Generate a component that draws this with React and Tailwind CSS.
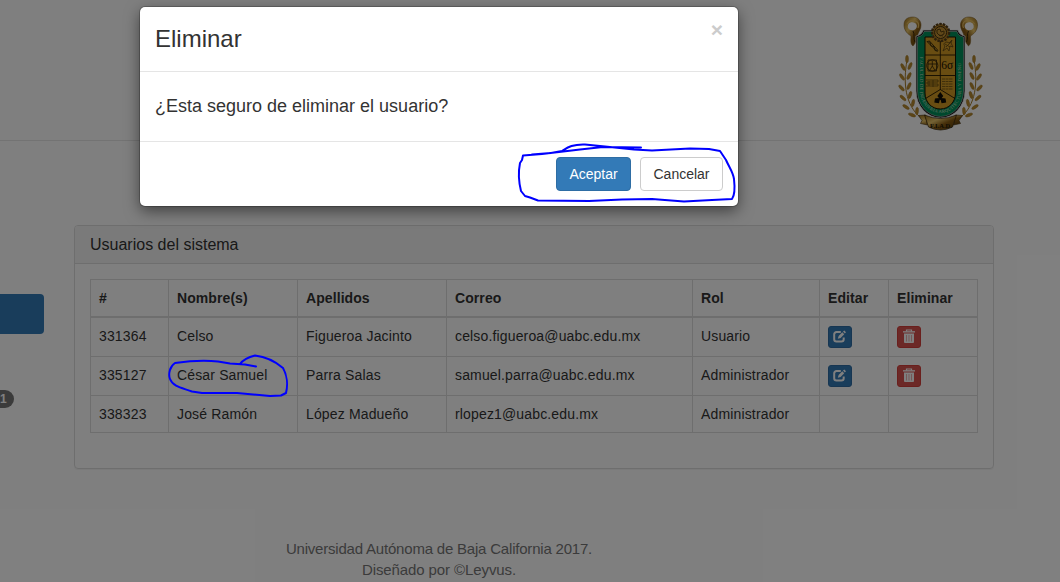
import React from "react";

const users = [
  { id: "331364", name: "Celso", last: "Figueroa Jacinto", mail: "celso.figueroa@uabc.edu.mx", role: "Usuario", actions: true, h: "h-[39px]" },
  { id: "335127", name: "César Samuel", last: "Parra Salas", mail: "samuel.parra@uabc.edu.mx", role: "Administrador", actions: true, h: "h-[39px]" },
  { id: "338323", name: "José Ramón", last: "López Madueño", mail: "rlopez1@uabc.edu.mx", role: "Administrador", actions: false, h: "h-[37px]" },
];

const headings = ["#", "Nombre(s)", "Apellidos", "Correo", "Rol", "Editar", "Eliminar"];
const columns = "grid grid-cols-[78px_129px_149px_246px_127px_69px_89px]";

function EditIcon() {
  return (
    <svg width="13" height="13" viewBox="0 0 13 13" fill="none">
      <path d="M7.800 2H3.500A2.300 2.300 0 0 0 1.200 4.300v4.900a2.300 2.300 0 0 0 2.300 2.300h4.900a2.300 2.300 0 0 0 2.300-2.300V7.600" stroke="#fff" strokeWidth="2" />
      <path d="M4.800 8.800l.8-2.900L9.300 2.300l1.900 1.900L7.600 7.900z" fill="#fff" />
      <path d="M10 1.600L11.300.4l1.700 1.800-1.200 1.200z" fill="#fff" />
    </svg>
  );
}

function TrashIcon() {
  return (
    <svg width="12" height="14" viewBox="0 0 12 14" fill="none">
      <path d="M3.500 2.500V1h5v1.500" stroke="#fff" strokeWidth="1.200" />
      <path d="M0 2.200h12v1.300H0z" fill="#fff" />
      <path d="M1 4.500h10V13q0 1-1 1H2q-1 0-1-1z" fill="#fff" />
      <path d="M3.500 6v6.500M6 6v6.500M8.500 6v6.500" stroke="#d9534f" strokeOpacity=".65" strokeWidth=".7" />
    </svg>
  );
}

function Ram({ flip }) {
  return (
    <g transform={flip ? "translate(101.500 0) scale(-1 1)" : undefined}>
      <path d="M21 31C16 28 14 24 14 20C14 14 18 12 23 12C28 12 31 16 31 20C31 24 29 26 28 29C27 32 28 35 26 37L23 41C20 39 21 34 21 31Z" fill="url(#gold)" stroke="#76551c" strokeWidth=".5" />
      <path d="M18 23C17 18 21 16 25 18C28 20 27 24 24 25Q20 26 18 23Z" fill="#fff" />
      <path d="M17 19Q20 14 26 16Q30 18 28 23" stroke="#e7bd60" strokeWidth="1.200" />
      <path d="M23 26C25 29 23 34 25 37" stroke="#392809" strokeWidth="1" />
    </g>
  );
}

function Laurel({ flip }) {
  const leaves = [
    [17, 54, 0], [13, 62, -28], [20, 61, 24], [12, 72, -34], [19, 71, 26], [11.5, 83, -42], [19, 81, 24],
    [13, 93, -48], [20, 90, 18], [16, 102, -56], [23, 98, 12], [22, 110, -68], [27, 106, 4],
  ];
  return (
    <g transform={flip ? "translate(101 0) scale(-1 1)" : undefined}>
      <path d="M17 55C13 78 15 100 31 113" stroke="#a67b24" strokeWidth="1" />
      {leaves.map(([x, y, a]) => (
        <ellipse key={y} cx={x} cy={y} rx="1.500" ry="3.800" transform={`rotate(${a} ${x} ${y})`} fill="#b88a2c" stroke="#987026" strokeWidth=".4" />
      ))}
    </g>
  );
}

function Crest() {
  return (
    <svg width="100" height="130" viewBox="0 0 100 130" fill="none">
      <defs>
        <linearGradient id="gold" x1="0" x2="1" y1="0" y2="1">
          <stop offset="0" stopColor="#9c7018" />
          <stop offset=".35" stopColor="#e9c66b" />
          <stop offset=".6" stopColor="#8a5e14" />
          <stop offset="1" stopColor="#573b0c" />
        </linearGradient>
        <path id="motto" d="M29.800 52V85A20.700 23 0 0 0 71.200 85V52" />
      </defs>
      <Laurel />
      <Laurel flip />
      <Ram />
      <Ram flip />
      <path d="M33 25H68Q69 30 75 31V86A24.500 27 0 0 1 26 86V31Q32 30 33 25Z" fill="#000" stroke="#eee" strokeWidth=".8" />
      <path d="M34 26.500H67Q68 31 73.500 32V86A23 25.500 0 0 1 27.500 86V32Q33 31 34 26.500Z" fill="#00905a" stroke="#ddd" strokeWidth=".5" />
      <path d="M35 32H65.500V88C65.500 97 59 104 50.300 104C41.500 104 35 97 35 88Z" fill="#d39a24" stroke="#171000" strokeWidth="1" />
      <path d="M50.300 32V85M35 50H65.500M35 70.500H65.500M35.500 93.500L50.300 84.500L65 93.500" stroke="#211600" strokeWidth=".9" />
      <path d="M37 36.500l10 10M39 35.500l9 10M37 36.500l3 .5 1 4 3 .5 1 4 3 .5" stroke="#40310b" strokeWidth="1" />
      <path d="M57 37c-3 0-4 3-2 4l-2 5 4-3 2 3 1-5 3 1-2-4 1-3-3 3zM55 39l5 3m1-5l-5 5" stroke="#5e4511" strokeWidth=".8" />
      <circle cx="42.300" cy="60.500" r="5.600" stroke="#211600" strokeWidth=".8" />
      <path d="M38 55h8.500v11H38zM42.300 56v5l-3 5m3-5l3 5M38 59h8.500" stroke="#2c2007" strokeWidth=".8" />
      <text x="57.300" y="63.500" textAnchor="middle" fontSize="11.500" fill="#171000" className="font-['Liberation_Serif']">6σ</text>
      <path d="M36 75h12v2H37v2h11v2H36m3-5v5m4-6v7" stroke="#60490f" strokeWidth=".8" />
      <path d="M52 74h11M52 76.500h11M52 79h11M52 81.500h11M52 84h11" stroke="#685014" strokeWidth=".8" strokeDasharray="3 .5" />
      <path d="M50.300 94l-2.200-3 2.200-3 2.200 3zM49.500 93.500l-4 .5-.5 3 3.500.5zM51 93.500l4 .5.5 3-3.500.5z" fill="#100d05" stroke="#100d05" strokeWidth="1.200" />
      <text fontSize="4.600" fill="#d5e0c5" className="font-['Liberation_Serif']">
        <textPath href="#motto" textLength="128">FACULTAD DE INGENIERIA ARQUITECTURA Y DISEÑO</textPath>
      </text>
      <circle cx="50.600" cy="27.500" r="8.500" fill="#b78322" stroke="#59401a" strokeWidth="2.400" strokeDasharray="2.500 1" />
      <circle cx="50.600" cy="27.500" r="6" fill="#c29033" stroke="#3d2d10" />
      <path d="M47 25l3-1 1 3 3-1v3l-4 2-3-3zM49 30l4 1" stroke="#59400f" strokeWidth="1" />
      <path d="M28.500 110.500l7-.5 2 10-7-1.500 1.500-3zM72.500 110.500l-7-.5-2 10 7-1.500-1.500-3z" fill="url(#gold)" stroke="#3f2d0b" strokeWidth=".6" />
      <path d="M34.500 110Q50.500 117 66.500 110L62.500 122Q50.500 128 38.500 122Z" fill="url(#gold)" stroke="#322308" strokeWidth=".7" />
      <text x="51" y="122.500" textAnchor="middle" fontSize="6.500" fontWeight="bold" fill="#201604" className="font-['Liberation_Serif']">F.I.A.D.</text>
    </svg>
  );
}

function Table() {
  const cell = "flex items-center border-r border-[#ddd] px-2";
  return (
    <div className="border-l border-t border-[#ddd] text-[14px] tracking-[0.15px]">
      <div className={`${columns} h-[38px] font-bold tracking-[0.08px]`}>
        {headings.map((h) => <div key={h} className={`${cell} border-b-2`}>{h}</div>)}
      </div>
      {users.map((u) => (
        <div key={u.id} className={`${columns} ${u.h}`}>
          {[u.id, u.name, u.last, u.mail, u.role].map((v) => <div key={v} className={u.actions ? `${cell} border-b pb-0.5` : `${cell} border-b`}>{v}</div>)}
          <div className={`${cell} border-b`}>
            {u.actions && <button aria-label="Editar" className="flex h-[22px] w-6 items-start rounded-[3px] border border-[#2e6da4] bg-[#337ab7] pl-1 pt-[3px]"><EditIcon /></button>}
          </div>
          <div className={`${cell} border-b`}>
            {u.actions && <button aria-label="Eliminar" className="flex h-[22px] w-6 items-start justify-center rounded-[3px] border border-[#d43f3a] bg-[#d9534f] pt-0.5"><TrashIcon /></button>}
          </div>
        </div>
      ))}
    </div>
  );
}

export default function App() {
  return (
    <div className="relative h-[582px] w-[1060px] overflow-hidden bg-white font-['Liberation_Sans',Arial,sans-serif] text-[#333]">
      <header className="flex h-[141px] justify-end border-b border-[#e7e7e7] pr-[70px] pt-[5px]"><Crest /></header>
      <main className="flex h-[328px] pt-[84px]">
        <aside className="w-[74px] shrink-0 pt-[69px]">
          <div className="h-10 w-11 rounded-r bg-[#337ab7]" />
          <div className="mt-14 flex h-[18px] w-3.5 items-center rounded-r-[10px] bg-[#777] text-[12px] font-bold text-white">1</div>
        </aside>
        <section className="h-[244px] w-[920px] rounded border border-[#ddd] shadow-[0_1px_1px_rgba(0,0,0,0.05)]">
          <h3 className="flex h-[38px] items-center rounded-t-[3px] border-b border-[#ddd] bg-[#f5f5f5] px-[15px] text-[16px]">Usuarios del sistema</h3>
          <div className="p-[15px]"><Table /></div>
        </section>
      </main>
      <footer className="w-[878px] pt-[69px] text-center text-[15px] leading-[21px] text-[#777]">
        <p className="tracking-[-0.2px]">Universidad Autónoma de Baja California 2017.</p>
        <p className="tracking-[-0.1px]">Diseñado por ©Leyvus.</p>
      </footer>

      <div className="absolute inset-0 bg-black/50 pl-[140px] pt-[7px]">
        <div role="dialog" className="h-[199px] w-[598px] rounded-[5px] bg-white shadow-[0_5px_15px_rgba(0,0,0,0.5),0_0_0_1px_rgba(0,0,0,0.2)]">
          <div className="flex h-[65px] items-center justify-between border-b border-[#e5e5e5] px-[15px]">
            <h2 className="text-[24px]">Eliminar</h2>
            <button className="pb-[19px] text-[21px] font-bold leading-none text-[#ccc]">×</button>
          </div>
          <p className="flex h-[69px] items-center px-[15px] text-[18px]">¿Esta seguro de eliminar el usuario?</p>
          <div className="flex justify-end gap-[9px] border-t border-[#e5e5e5] p-[15px] text-[14px]">
            <button className="h-[34px] w-[75px] rounded border border-[#2e6da4] bg-[#337ab7] text-white">Aceptar</button>
            <button className="h-[34px] w-[83px] rounded border border-[#ccc] bg-white">Cancelar</button>
          </div>
        </div>
      </div>

      <svg className="pointer-events-none absolute inset-0" width="1060" height="582" fill="none" stroke="#0000fe" strokeWidth="2" strokeLinecap="round" strokeLinejoin="round">
        <path d="M641 147.500L603 147L580 149.500L559 152L542 154L523 155.500L522 160L520 163C518 173 519 183 521 191L525 196L530 197.500L538 200.500L589 201L622 199.500L652 199L684 201.500L712 200L732 199C735 195 735 188 734 179C733 172 729 167 726 160L720 151L709 149L690 148.500L652 150.500L634 149.500L605 146.500L585 144.500C572 144 567 148 562 151L551 153L532 154.500" />
        <path d="M256 366.500L245 364.500L230 363.500L218 361.500C204 360 189 361 175 363C170 366 168 374 170 379C173 387 183 388 192 391.500L202 393L237 393L270 396L281 395.500L286 393C288 385 287 375 283 368C276 362 268 357 255 355.500C249 357 243 360 240 364" />
      </svg>
    </div>
  );
}
